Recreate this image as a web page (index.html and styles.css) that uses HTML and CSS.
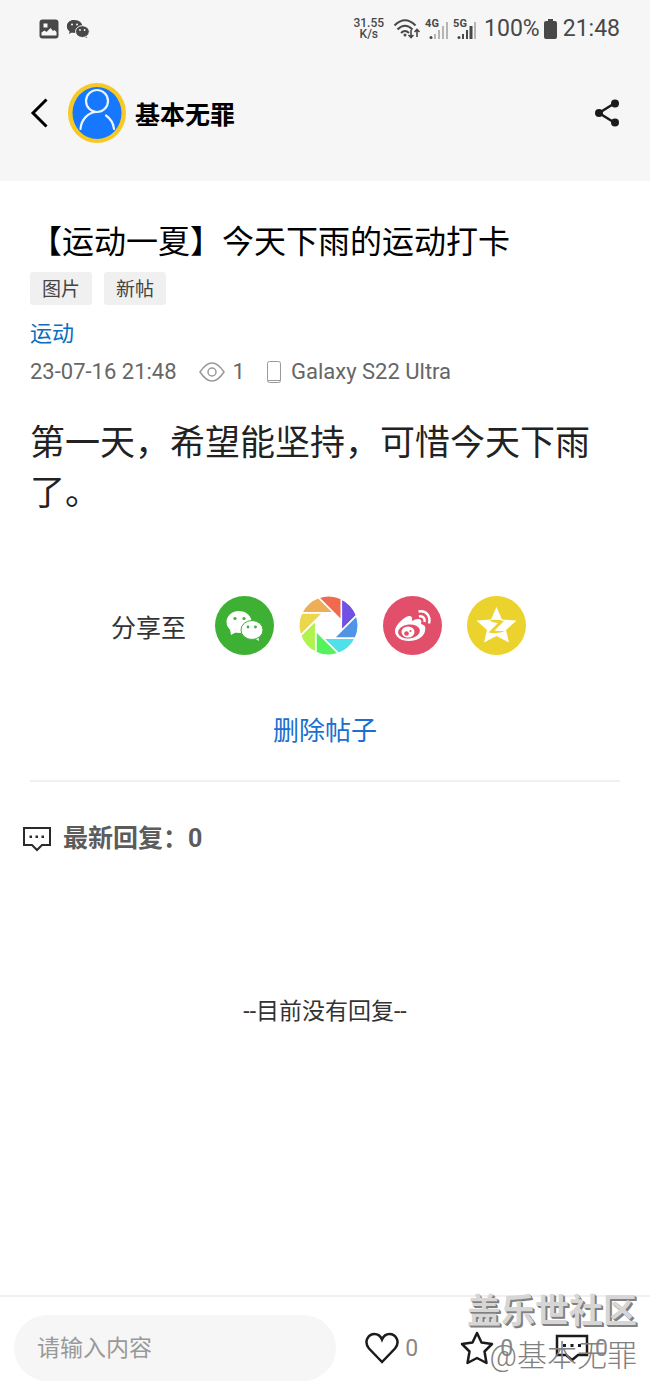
FILE: index.html
```html
<!DOCTYPE html>
<html lang="zh-CN">
<head>
    <meta charset="UTF-8">
    <meta name="viewport" content="width=device-width, initial-scale=1.0">
    <title>【运动一夏】今天下雨的运动打卡</title>
    <link rel="stylesheet" href="styles.css">
</head>
<body>
    <header class="top">
        <div class="status">
            <svg width="20" height="20" viewBox="0 0 20 20">
                <rect x="0.500" y="0.500" width="19" height="19" rx="3" fill="#484848"/>
                <rect x="4.500" y="4.500" width="4" height="4" fill="#f6f6f6"/>
                <path d="M2.500 16.500v-3l3-2 2 1.500 4-4 2.500 3 1.500-1 2 2v3.500z" fill="#f6f6f6"/>
            </svg>
            <svg class="status-wechat" width="24" height="20" viewBox="0 0 24 20">
                <path d="M8.500 1C4 1 1 3.700 1 7.200c0 2 1 3.700 2.700 4.900L3 15l3.200-1.800c1 .3 2 .4 3 .3" fill="#484848"/>
                <ellipse cx="8.600" cy="7.400" rx="7.700" ry="6.400" fill="#484848"/>
                <path d="M20 15.500l1.300 3.500-3.800-1.400z" fill="#484848"/>
                <ellipse cx="16.400" cy="12.600" rx="6.900" ry="5.900" fill="#484848" stroke="#f6f6f6"/>
                <g fill="#f6f6f6"><circle cx="6" cy="5.500" r="1"/><circle cx="11" cy="5.500" r="1"/><circle cx="14" cy="11" r="0.900"/><circle cx="18.600" cy="11" r="0.900"/></g>
            </svg>
            <span class="speed"><span>31.55</span><span>K/s</span></span>
            <svg class="wifi" width="28" height="22" viewBox="0 0 28 22" fill="none" stroke="#484848" stroke-width="2">
                <path d="M1.500 7.500Q12 -3 22.500 7.500M4.500 11.500Q12 4 19.500 11.500M8 15Q12 11 16 15"/>
                <circle cx="12" cy="17" r="1.500" fill="#484848" stroke="none"/>
                <path d="M18 12v7M15.500 17l2.500 2.500 2.500-2.500M24 19v-7M21.500 14l2.500-2.500 2.500 2.500" stroke-width="1.600"/>
            </svg>
            <span class="signal">
                <b>4G</b>
                <svg width="19" height="17" viewBox="0 0 19 17">
                    <circle cx="2" cy="15.500" r="1.500" fill="#484848"/>
                    <path d="M5 12h2v5H5zM9 8h2v9H9zM13 4h2v13h-2zM17 0h2v17h-2z" fill="#b5b5b5"/>
                </svg>
            </span>
            <span class="signal">
                <b>5G</b>
                <svg width="19" height="17" viewBox="0 0 19 17">
                    <circle cx="2" cy="15.500" r="1.500" fill="#484848"/>
                    <path d="M5 12h2v5H5zM9 8h2v9H9zM12.500 4h3v13h-3z" fill="#484848"/>
                    <path d="M17 0h2v17h-2z" fill="#b5b5b5"/>
                </svg>
            </span>
            <span class="battery">100%</span>
            <svg width="13" height="20" viewBox="0 0 13 20"><path d="M4 0h5v2h2q2 0 2 2v14q0 2-2 2H2q-2 0-2-2V4q0-2 2-2h2z" fill="#484848"/></svg>
            <time class="clock">21:48</time>
        </div>
        <nav class="nav">
            <button class="icon-btn" aria-label="返回">
                <svg width="18" height="30" viewBox="0 0 18 30"><path d="M16.500 1.500L3 15l13.500 13.500" fill="none" stroke="#000" stroke-width="3"/></svg>
            </button>
            <svg class="avatar" width="58" height="60" viewBox="0 0 58 60">
                <ellipse cx="29" cy="30" rx="29" ry="30" fill="#f8c924"/>
                <ellipse cx="29" cy="30" rx="24.500" ry="26" fill="#1677ff"/>
                <g fill="none" stroke="#e9f5ff" stroke-width="2.200">
                    <circle cx="29" cy="18" r="11"/>
                    <path d="M29 29C20 29 13 37 12.500 46M38 32.500C43 36 45.500 41 46 46" stroke-linecap="round"/>
                </g>
            </svg>
            <span class="nickname">基本无罪</span>
            <button class="icon-btn share-btn" aria-label="分享">
                <svg width="26" height="28" viewBox="0 0 26 28" fill="#1b1b1b">
                    <path d="M21 4L5 14l16 10" fill="none" stroke="#1b1b1b" stroke-width="2.500"/>
                    <circle cx="5" cy="14" r="4"/><circle cx="21" cy="4.500" r="4"/><circle cx="21" cy="23.500" r="4"/>
                </svg>
            </button>
        </nav>
    </header>

    <main class="content">
        <article class="post">
            <h1>【运动一夏】今天下雨的运动打卡</h1>
            <div class="tags"><span class="tag">图片</span><span class="tag">新帖</span></div>
            <a class="board" href="#board">运动</a>
            <div class="meta">
                <time>23-07-16 21:48</time>
                <span class="views">
                    <svg width="26" height="20" viewBox="0 0 26 20" fill="none" stroke="#999" stroke-width="1.500"><path d="M1 10Q7 1 13 1t12 9q-6 9-12 9T1 10z"/><circle cx="13" cy="10" r="4"/></svg>
                    1
                </span>
                <span class="device">
                    <svg width="14" height="22" viewBox="0 0 14 22" fill="none" stroke="#999"><rect x="0.500" y="0.500" width="13" height="21" rx="2"/><path d="M1 19.500h12"/></svg>
                    Galaxy S22 Ultra
                </span>
            </div>
            <p class="text">第一天，希望能坚持，可惜今天下雨了。</p>

            <div class="share">
                <span class="share-label">分享至</span>
                <button class="icon-btn" aria-label="微信">
                    <svg width="59" height="59" viewBox="0 0 59 59">
                        <circle cx="29.500" cy="29.500" r="29.500" fill="#3eb135"/>
                        <g fill="#fff">
                            <path d="M15 33l1 6 7-4z"/><ellipse cx="24" cy="26" rx="12.500" ry="11"/>
                            <path d="M39 42l5 3-1-6z"/><ellipse cx="37" cy="34" rx="11" ry="9.500" stroke="#3eb135"/>
                        </g>
                        <g fill="#3eb135"><circle cx="20" cy="22.500" r="1.600"/><circle cx="29" cy="22.500" r="1.600"/><circle cx="33" cy="31" r="1.400"/><circle cx="40.500" cy="31" r="1.400"/></g>
                    </svg>
                </button>
                <button class="icon-btn" aria-label="朋友圈">
                    <svg width="59" height="59" viewBox="-30 -30 60 60" stroke="#fff" stroke-width="1.600">
                        <defs><path id="blade" d="M13-27.200A30.200 30.200 0 0 1 28.500-10.100L13 5.400z"/></defs>
                        <use href="#blade" fill="#6f51e6"/>
                        <use href="#blade" fill="#4f94e6" transform="rotate(45)"/>
                        <use href="#blade" fill="#50e0ea" transform="rotate(90)"/>
                        <use href="#blade" fill="#54f35c" transform="rotate(135)"/>
                        <use href="#blade" fill="#b0f34f" transform="rotate(180)"/>
                        <use href="#blade" fill="#ecd74c" transform="rotate(225)"/>
                        <use href="#blade" fill="#eeae55" transform="rotate(270)"/>
                        <use href="#blade" fill="#f06a50" transform="rotate(315)"/>
                    </svg>
                </button>
                <button class="icon-btn" aria-label="微博">
                    <svg width="59" height="59" viewBox="0 0 59 59">
                        <circle cx="29.500" cy="29.500" r="29.500" fill="#e14f6b"/>
                        <path d="M12 35c0-5 6-11 11-14 4-2 7-1 6 4 5-3 11-3 9 3 4 1 5 3 4 7-1 6-8 10-16 10-8 0-14-4-14-10z" fill="#fff"/>
                        <ellipse cx="26" cy="35.500" rx="11" ry="7" fill="#e14f6b" transform="rotate(-6 26 35.500)"/>
                        <ellipse cx="25" cy="36" rx="6.500" ry="5.500" fill="#fff"/>
                        <circle cx="23.500" cy="37.500" r="2.300" fill="#e14f6b"/><circle cx="27.500" cy="35" r="1" fill="#e14f6b"/>
                        <path d="M35.500 15.500C43 14 48 20 46 27.500M36 20.500c4-1 6.500 2 5.500 5.500" fill="none" stroke="#fff" stroke-width="2.500"/>
                    </svg>
                </button>
                <button class="icon-btn" aria-label="QQ空间">
                    <svg width="59" height="59" viewBox="0 0 59 59">
                        <circle cx="29.500" cy="29.500" r="29.500" fill="#ecd22c"/>
                        <path d="M29.500 11l5.500 12.500 14.500 1L39 34l3 12.500-12.500-6.500L17 46.500 20 34 9.500 24.500l14.500-1z" fill="#fff"/>
                        <path d="M22 24.500q7-1.500 15 .5l-9.500 9.500q6 1 11.500 0-8 4-17.500 2L31 27q-5-.5-9-2.500z" fill="#ecd22c"/>
                    </svg>
                </button>
            </div>
            <button class="delete">删除帖子</button>
        </article>

        <section class="replies">
            <h2>
                <svg width="30" height="26" viewBox="0 0 30 26"><path d="M2 2h26v17h-8l-5 5-5-5H2z" fill="none" stroke="#2a2a2a" stroke-width="2"/><path d="M7.500 9.500h2.500v2.500h-2.500zM13.500 9.500h2.500v2.500h-2.500zM19.500 9.500h2.500v2.500h-2.500z" fill="#2a2a2a"/></svg>
                <span>最新回复：0</span>
            </h2>
            <p class="empty">--目前没有回复--</p>
        </section>
    </main>

    <footer class="bar">
        <input class="reply-input" type="text" placeholder="请输入内容" aria-label="请输入内容">
        <button class="action">
            <svg width="34" height="32" viewBox="0 0 34 32"><path d="M17 30L4 16.500C-2 9 4 2 9.500 2 13 2 15.500 4 17 7.500 18.500 4 21 2 24.500 2 30 2 36 9 30 16.500z" fill="none" stroke="#1b1b1b" stroke-width="2.500"/></svg>
            0
        </button>
        <button class="action">
            <svg width="34" height="34" viewBox="0 0 34 34"><path d="M17 2l4.500 9.500L32 13l-7.500 7.500L26.500 32 17 27 7.500 32l2-11.500L2 13l10.500-1.500z" fill="none" stroke="#1b1b1b" stroke-width="2.500" stroke-linejoin="round"/></svg>
            0
        </button>
        <button class="action">
            <svg width="34" height="28" viewBox="0 0 34 28"><path d="M2 2h30v19h-9l-6 5-6-5H2z" fill="none" stroke="#1b1b1b" stroke-width="2.500"/><path d="M8 10h3v3H8zM15.500 10h3v3h-3zM23 10h3v3h-3z" fill="#1b1b1b"/></svg>
            0
        </button>
        <div class="watermark">
            <strong>盖乐世社区</strong>
            <span>@基本无罪</span>
        </div>
    </footer>
</body>
</html>
```
FILE: styles.css
```css
* {
    box-sizing: border-box;
}
body {
    display: flex;
    flex-direction: column;
    min-height: 100vh;
    margin: 0;
    background-color: #fff;
    color: #222;
    font-family: Roboto, "Noto Sans CJK SC", sans-serif;
}
svg {
    display: block;
    flex: none;
}
button {
    padding: 0;
    border: none;
    background: none;
    font-family: inherit;
    cursor: pointer;
}
h1, h2, p {
    margin: 0;
}

/* status bar and header */
.top {
    height: 181px;
    background-color: #f6f6f6;
}
.status {
    display: flex;
    align-items: center;
    height: 58px;
    padding: 0 30px 0 39px;
    color: #484848;
}
.status-wechat {
    margin-left: 7px;
}
.speed {
    display: flex;
    flex-direction: column;
    align-items: center;
    margin-left: auto;
    font-size: 12px;
    line-height: 11px;
    font-weight: 500;
}
.wifi {
    margin: 0 4px 0 9px;
}
.signal {
    display: flex;
    align-items: flex-end;
    position: relative;
    width: 23px;
    height: 20px;
    margin-right: 5px;
    padding-left: 4px;
}
.signal b {
    position: absolute;
    top: 0;
    left: 0;
    font-size: 11px;
    line-height: 9px;
}
.battery, .clock {
    font-size: 23px;
    line-height: 28px;
}
.battery {
    margin: 0 4px 0 3px;
}
.clock {
    margin-left: 6px;
}
.nav {
    display: flex;
    align-items: center;
    height: 110px;
    padding: 0 30px;
}
.avatar {
    margin: 0 9px 0 20px;
}
.nickname {
    color: #000;
    font-size: 25px;
    font-weight: bold;
}
.share-btn {
    margin-left: auto;
}

/* post */
.content {
    flex: 1;
}
.post {
    margin: 0 30px;
    padding: 37px 0 31px;
    border-bottom: 2px solid #f0f0f0;
}
h1 {
    color: #000;
    font-size: 32px;
    line-height: 48px;
    font-weight: normal;
}
.tags {
    display: flex;
    gap: 12px;
    margin-top: 6px;
}
.tag {
    padding: 2px 12px 0;
    border-radius: 3px;
    background-color: #f0f0f0;
    color: #444;
    font-size: 19px;
    line-height: 31px;
}
.board {
    display: block;
    margin-top: 14px;
    color: #0a6ebd;
    font-size: 22px;
    line-height: 30px;
    text-decoration: none;
}
.meta {
    display: flex;
    margin-top: 8px;
    color: #666;
    font-size: 22px;
    line-height: 30px;
}
.views, .device {
    display: flex;
    align-items: center;
    gap: 8px;
}
.views {
    margin: 0 22px;
}
.device {
    gap: 10px;
}
.text {
    margin-top: 32px;
    font-size: 35px;
    line-height: 50px;
}
.share {
    display: flex;
    align-items: center;
    justify-content: center;
    gap: 25px;
    margin-top: 77px;
    padding-right: 13px;
}
.share-label {
    margin-right: 4px;
    color: #333;
    font-size: 25px;
}
.delete {
    display: block;
    margin: 58px auto 0;
    color: #1b6fd0;
    font-size: 26px;
    line-height: 36px;
}

/* replies */
h2 {
    display: flex;
    align-items: center;
    gap: 11px;
    margin: 39px 22px 0;
    color: #5c5c5c;
    font-size: 25px;
    line-height: 36px;
}
.empty {
    margin-top: 139px;
    color: #333;
    font-size: 23px;
    line-height: 32px;
    text-align: center;
}

/* bottom bar */
.bar {
    display: flex;
    align-items: center;
    position: sticky;
    bottom: 0;
    gap: 42px;
    padding: 18px 42px 13px 14px;
    border-top: 2px solid #f0f0f0;
    background-color: #fff;
}
.reply-input {
    flex: 1;
    min-width: 0;
    height: 66px;
    margin-right: -13px;
    padding: 0 23px;
    border: none;
    border-radius: 33px;
    background-color: #f6f6f6;
    font-family: inherit;
    font-size: 23px;
}
.reply-input::placeholder {
    color: #999;
}
.action {
    display: flex;
    align-items: center;
    gap: 6px;
    color: #888;
    font-size: 23px;
}
.watermark {
    display: flex;
    flex-direction: column;
    align-items: flex-end;
    position: absolute;
    right: 13px;
    bottom: 16px;
    pointer-events: none;
}
.watermark strong {
    color: #d6d6d6;
    font-size: 34px;
    line-height: 46px;
    text-shadow: 1px 1px #808080, 2px 2px #808080;
}
.watermark span {
    color: #808080;
    font-size: 30px;
    font-weight: 300;
    line-height: 44px;
}
```
